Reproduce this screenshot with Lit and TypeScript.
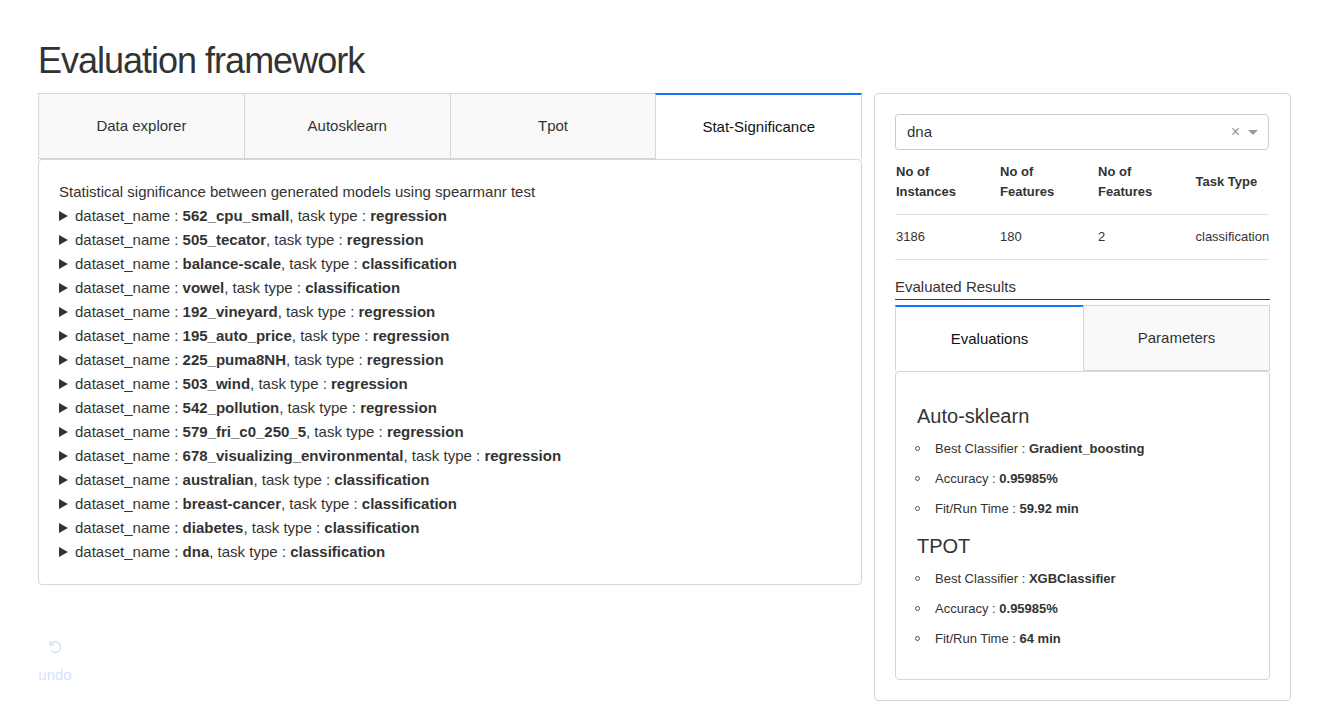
import { LitElement, html, css } from 'lit';
import { customElement } from 'lit/decorators.js';

const DATASETS: [string, string][] = [
  ['562_cpu_small', 'regression'],
  ['505_tecator', 'regression'],
  ['balance-scale', 'classification'],
  ['vowel', 'classification'],
  ['192_vineyard', 'regression'],
  ['195_auto_price', 'regression'],
  ['225_puma8NH', 'regression'],
  ['503_wind', 'regression'],
  ['542_pollution', 'regression'],
  ['579_fri_c0_250_5', 'regression'],
  ['678_visualizing_environmental', 'regression'],
  ['australian', 'classification'],
  ['breast-cancer', 'classification'],
  ['diabetes', 'classification'],
  ['dna', 'classification'],
];

const RESULTS = [
  { name: 'Auto-sklearn', best: 'Gradient_boosting', acc: '0.95985%', time: '59.92 min' },
  { name: 'TPOT', best: 'XGBClassifier', acc: '0.95985%', time: '64 min' },
];

@customElement('app-root')
export class AppRoot extends LitElement {
  static styles = css`
    :host {
      display: block;
      font-family: 'Liberation Sans', Arial, sans-serif;
      color: #333;
      background: #fff;
      font-size: 15px;
    }
    .page {
      padding: 0 38px;
    }
    h1 {
      margin: 0;
      padding-top: 38px;
      height: 55px;
      font-size: 36px;
      line-height: 45px;
      font-weight: 400;
      letter-spacing: -1px;
    }
    .columns {
      display: grid;
      grid-template-columns: 824px 417px;
      column-gap: 12px;
      align-items: start;
    }
    .tabs {
      display: flex;
      height: 66px;
    }
    .tab {
      flex: 1 1 100%;
      box-sizing: border-box;
      display: flex;
      align-items: center;
      justify-content: center;
      padding-bottom: 2px;
      background: #f9f9f9;
      border: 1px solid #d6d6d6;
      border-right: none;
      color: #333;
    }
    .tab:last-child {
      border-right: 1px solid #d6d6d6;
    }
    .tab.active {
      background: #fff;
      border-top: 2px solid #1975fa;
      border-bottom: none;
      color: #111;
    }
    .panel {
      box-sizing: border-box;
      border: 1px solid #d6d6d6;
      border-radius: 4px;
      background: #fff;
    }
    .main-panel {
      height: 426px;
      padding: 20px;
      line-height: 24px;
    }
    .row {
      display: flex;
      align-items: center;
    }
    .tri {
      width: 0;
      height: 0;
      border-left: 9px solid #333;
      border-top: 5px solid transparent;
      border-bottom: 5px solid transparent;
      margin-right: 7px;
    }
    .row span {
      white-space: pre;
    }
    .undo {
      margin-top: 54px;
      width: 34px;
      text-align: center;
      color: #1975fa;
      opacity: 0.2;
    }
    .undo svg {
      display: block;
      margin: 0 auto 11px;
    }
    .side {
      height: 608px;
      padding: 20px;
    }
    .select {
      box-sizing: border-box;
      width: 374px;
      height: 36px;
      border: 1px solid #ccc;
      border-radius: 4px;
      display: flex;
      align-items: center;
      padding: 0 10px 0 11px;
    }
    .select .val {
      flex: 1;
      margin-bottom: 2px;
    }
    .clear {
      color: #999;
      font-size: 16px;
      margin-right: 8px;
    }
    .caret {
      width: 0;
      height: 0;
      border-top: 5px solid #999;
      border-left: 5px solid transparent;
      border-right: 5px solid transparent;
    }
    table {
      width: 374px;
      table-layout: fixed;
      border-collapse: collapse;
      font-size: 13px;
      margin-top: 2px;
    }
    th {
      text-align: left;
      font-weight: 700;
      line-height: 20px;
      padding: 10px 0 12px 1px;
      border-bottom: 1px solid #e0e0e0;
    }
    td {
      padding: 0 0 2px 1px;
      height: 42px;
      border-bottom: 1px solid #e0e0e0;
      white-space: nowrap;
    }
    .col-a {
      width: 104px;
    }
    .col-b {
      width: 98px;
    }
    .col-c {
      width: 97.5px;
    }
    .section-title {
      margin-top: 18px;
      height: 21px;
      line-height: 18px;
      border-bottom: 1px solid #006400;
      width: 375px;
    }
    .inner-tabs {
      margin-top: 5px;
      width: 375px;
    }
    .inner-tabs .tab:first-child {
      flex: 0 0 188px;
    }
    .result-panel {
      width: 375px;
      height: 309px;
      padding: 33px 20px 0 21px;
    }
    h2 {
      margin: 0;
      font-size: 20px;
      font-weight: 400;
      line-height: 22px;
    }
    ul {
      list-style: none;
      margin: 6px 0 12px;
      padding: 0;
      font-size: 13px;
    }
    li {
      height: 30px;
      display: flex;
      align-items: center;
      white-space: pre;
    }
    li::before {
      content: '';
      box-sizing: border-box;
      width: 5px;
      height: 5px;
      border: 1px solid #555;
      border-radius: 50%;
      margin: 0 15px 0 -2px;
    }
  `;

  render() {
    return html`
      <div class="page">
        <h1>Evaluation framework</h1>
        <div class="columns">
          <div>
            <div class="tabs">
              <div class="tab">Data explorer</div>
              <div class="tab">Autosklearn</div>
              <div class="tab">Tpot</div>
              <div class="tab active">Stat-Significance</div>
            </div>
            <div class="panel main-panel">
              <div>Statistical significance between generated models using spearmanr test</div>
              ${DATASETS.map(
                ([name, type]) => html`
                  <div class="row">
                    <i class="tri"></i>
                    <span>dataset_name : <b>${name}</b>, task type : <b>${type}</b></span>
                  </div>
                `
              )}
            </div>
            <div class="undo">
              <svg width="16" height="16" viewBox="0 0 16 16" fill="none" stroke="currentColor" stroke-width="1.5">
                <path d="M3.5 5.8a5.3 5.3 0 1 1 .6 5.6" />
                <path d="M3 2v4h4" />
              </svg>
              undo
            </div>
          </div>
          <div class="panel side">
            <div class="select">
              <span class="val">dna</span>
              <span class="clear">×</span>
              <i class="caret"></i>
            </div>
            <table>
              <colgroup>
                <col class="col-a" />
                <col class="col-b" />
                <col class="col-c" />
                <col />
              </colgroup>
              <thead>
                <tr>
                  <th>No of<br />Instances</th>
                  <th>No of<br />Features</th>
                  <th>No of<br />Features</th>
                  <th>Task Type</th>
                </tr>
              </thead>
              <tbody>
                <tr>
                  <td>3186</td>
                  <td>180</td>
                  <td>2</td>
                  <td>classification</td>
                </tr>
              </tbody>
            </table>
            <div class="section-title">Evaluated Results</div>
            <div class="tabs inner-tabs">
              <div class="tab active">Evaluations</div>
              <div class="tab">Parameters</div>
            </div>
            <div class="panel result-panel">
              ${RESULTS.map(
                (r) => html`
                  <h2>${r.name}</h2>
                  <ul>
                    <li>Best Classifier : <b>${r.best}</b></li>
                    <li>Accuracy : <b>${r.acc}</b></li>
                    <li>Fit/Run Time : <b>${r.time}</b></li>
                  </ul>
                `
              )}
            </div>
          </div>
        </div>
      </div>
    `;
  }
}
